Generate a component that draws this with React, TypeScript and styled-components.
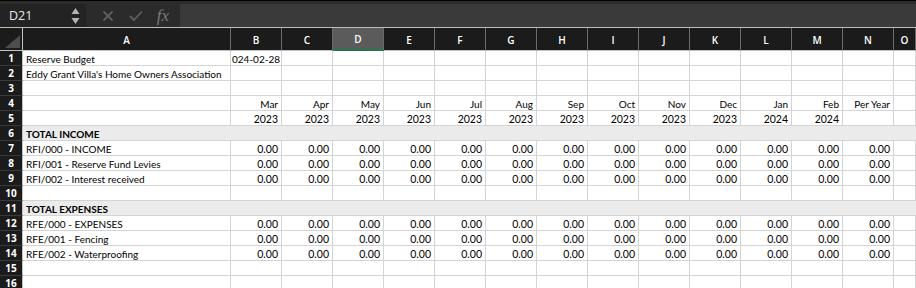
import React from 'react';
import styled, { createGlobalStyle } from 'styled-components';

const GlobalStyle = createGlobalStyle`
  html, body { margin: 0; padding: 0; background: #ffffff; overflow: hidden; }
  body { font-family: Lato, "Liberation Sans", sans-serif; }
`;

const COLS = '23px 208px repeat(13, 51px) 1fr';
const LETTERS = ['A', 'B', 'C', 'D', 'E', 'F', 'G', 'H', 'I', 'J', 'K', 'L', 'M', 'N', 'O'];
const MONTHS = ['Mar', 'Apr', 'May', 'Jun', 'Jul', 'Aug', 'Sep', 'Oct', 'Nov', 'Dec', 'Jan', 'Feb'];
const YEARS = ['2023', '2023', '2023', '2023', '2023', '2023', '2023', '2023', '2023', '2023', '2024', '2024'];

const Page = styled.div`
  width: 916px;
  height: 288px;
  overflow: hidden;
  background: #ffffff;
`;

const TopBar = styled.div`
  height: 27px;
  box-sizing: border-box;
  border-top: 1px solid #000;
  background: #2b2b2b;
  display: flex;
  align-items: stretch;
  padding-top: 3px;
`;

const NameBox = styled.div`
  width: 86px;
  background: #232323;
  display: flex;
  align-items: center;
  justify-content: space-between;
  padding: 0 6px 0 9px;
  box-sizing: border-box;
  color: #e8e8e8;
  font-family: "Open Sans", "Liberation Sans", sans-serif;
  font-size: 12.5px;
`;

const Spinner = styled.svg`
  width: 9px;
  height: 18px;
`;

const Tools = styled.div`
  width: 94px;
  display: flex;
  align-items: center;
  justify-content: space-around;
  padding: 0 4px 0 8px;
  box-sizing: border-box;
`;

const ToolIcon = styled.svg`
  width: 14px;
  height: 14px;
`;

const Fx = styled.span`
  font-family: "Liberation Serif", serif;
  font-style: italic;
  font-size: 17px;
  color: #7a7a7a;
  line-height: 1;
`;

const FormulaInput = styled.div`
  flex: 1;
  background: #3a3a3a;
`;

const Divider = styled.div`
  height: 1px;
  background: #bdbdbd;
`;

const Row = styled.div`
  display: grid;
  grid-template-columns: ${COLS};
`;

const Corner = styled.div`
  height: 23px;
  box-sizing: border-box;
  background: #1b1b1b;
  border-right: 1px solid #c4c4c4;
  border-bottom: 1px solid #c4c4c4;
  position: relative;
  &::after {
    content: '';
    position: absolute;
    right: 2px;
    bottom: 2px;
    width: 0;
    height: 0;
    border-left: 15px solid transparent;
    border-bottom: 13px solid #4d4d4d;
  }
`;

const ColHead = styled.div<{ $selected?: boolean }>`
  height: 23px;
  box-sizing: border-box;
  background: ${p => (p.$selected ? '#5b5b5b' : '#1b1b1b')};
  border-right: 1px solid #6a6a6a;
  border-bottom: ${p => (p.$selected ? '2px solid #1f7a47' : '1px solid #c4c4c4')};
  display: flex;
  align-items: center;
  justify-content: center;
  color: #ffffff;
  font-family: "Open Sans", "Liberation Sans", sans-serif;
  font-size: 10px;
  font-weight: 600;
  padding-top: 1px;
`;

const RowHead = styled.div`
  height: 15px;
  box-sizing: border-box;
  background: #1b1b1b;
  border-right: 1px solid #c4c4c4;
  border-bottom: 1px solid #3a3a3a;
  color: #ffffff;
  font-family: "Open Sans", "Liberation Sans", sans-serif;
  font-size: 10px;
  font-weight: 700;
  display: flex;
  align-items: flex-end;
  justify-content: center;
  line-height: 13px;
`;

const Cell = styled.div<{ $right?: boolean; $num?: boolean; $tight?: boolean }>`
  height: 15px;
  box-sizing: border-box;
  border-right: 1px solid #d4d4d4;
  border-bottom: 1px solid #d4d4d4;
  padding: 0 3px 0 ${p => (p.$tight ? '1px' : '3px')};
  display: flex;
  align-items: flex-end;
  justify-content: ${p => (p.$right ? 'flex-end' : 'flex-start')};
  font-size: ${p => (p.$num ? '10.5px' : '10px')};
  line-height: 12px;
  color: #000;
  white-space: nowrap;
  overflow: hidden;
`;

const Band = styled.div`
  grid-column: 2 / -1;
  height: 15px;
  box-sizing: border-box;
  background: #ebebeb;
  border-bottom: 1px solid #d4d4d4;
  padding: 0 3px;
  display: flex;
  align-items: flex-end;
  font-size: 10px;
  line-height: 12px;
  font-weight: 700;
  color: #000;
  white-space: nowrap;
`;

type RowDef =
  | { kind: 'band'; label: string }
  | { kind: 'cells'; a?: string; rest?: string[]; leftB?: boolean };

const zeros: string[] = Array(13).fill('0.00');

const rows: RowDef[] = [
  { kind: 'cells', a: 'Reserve Budget', rest: ['024-02-28'], leftB: true },
  { kind: 'cells', a: "Eddy Grant Villa's Home Owners Association" },
  { kind: 'cells' },
  { kind: 'cells', rest: [...MONTHS, 'Per Year'] },
  { kind: 'cells', rest: [...YEARS] },
  { kind: 'band', label: 'TOTAL INCOME' },
  { kind: 'cells', a: 'RFI/000 - INCOME', rest: zeros },
  { kind: 'cells', a: 'RFI/001 - Reserve Fund Levies', rest: zeros },
  { kind: 'cells', a: 'RFI/002 - Interest received', rest: zeros },
  { kind: 'cells' },
  { kind: 'band', label: 'TOTAL EXPENSES' },
  { kind: 'cells', a: 'RFE/000 - EXPENSES', rest: zeros },
  { kind: 'cells', a: 'RFE/001 - Fencing', rest: zeros },
  { kind: 'cells', a: 'RFE/002 - Waterproofing', rest: zeros },
  { kind: 'cells' },
  { kind: 'cells' },
];

const isNum = (s?: string) => !!s && /^[0-9.\-]+$/.test(s);

export default function App() {
  return (
    <>
      <GlobalStyle />
      <Page>
        <TopBar>
          <NameBox>
            <span>D21</span>
            <Spinner viewBox="0 0 9 18">
              <path d="M4.5 1 L8.5 7 L0.5 7 Z" fill="#b4b4b4" />
              <path d="M0.5 11 L8.5 11 L4.5 17 Z" fill="#b4b4b4" />
            </Spinner>
          </NameBox>
          <Tools>
            <ToolIcon viewBox="0 0 14 14">
              <path d="M3 3 L11 11 M11 3 L3 11" stroke="#5e5e5e" strokeWidth="1.8" strokeLinecap="round" />
            </ToolIcon>
            <ToolIcon viewBox="0 0 14 14">
              <path d="M1.5 7.5 L5 11 L12.5 3" stroke="#5e5e5e" strokeWidth="1.8" fill="none" strokeLinecap="round" strokeLinejoin="round" />
            </ToolIcon>
            <Fx>fx</Fx>
          </Tools>
          <FormulaInput />
        </TopBar>
        <Divider />
        <Row>
          <Corner />
          {LETTERS.map(l => (
            <ColHead key={l} $selected={l === 'D'}>{l}</ColHead>
          ))}
        </Row>
        {rows.map((r, i) => (
          <Row key={i}>
            <RowHead>{i + 1}</RowHead>
            {r.kind === 'band' ? (
              <Band>{r.label}</Band>
            ) : (
              <>
                <Cell>{r.a}</Cell>
                {Array.from({ length: 14 }).map((_, j) => {
                  const v = r.rest?.[j] ?? '';
                  const tight = !!r.leftB && j === 0;
                  return (
                    <Cell key={j} $right={!tight} $tight={tight} $num={isNum(v) && !tight}>
                      {v}
                    </Cell>
                  );
                })}
              </>
            )}
          </Row>
        ))}
      </Page>
    </>
  );
}
